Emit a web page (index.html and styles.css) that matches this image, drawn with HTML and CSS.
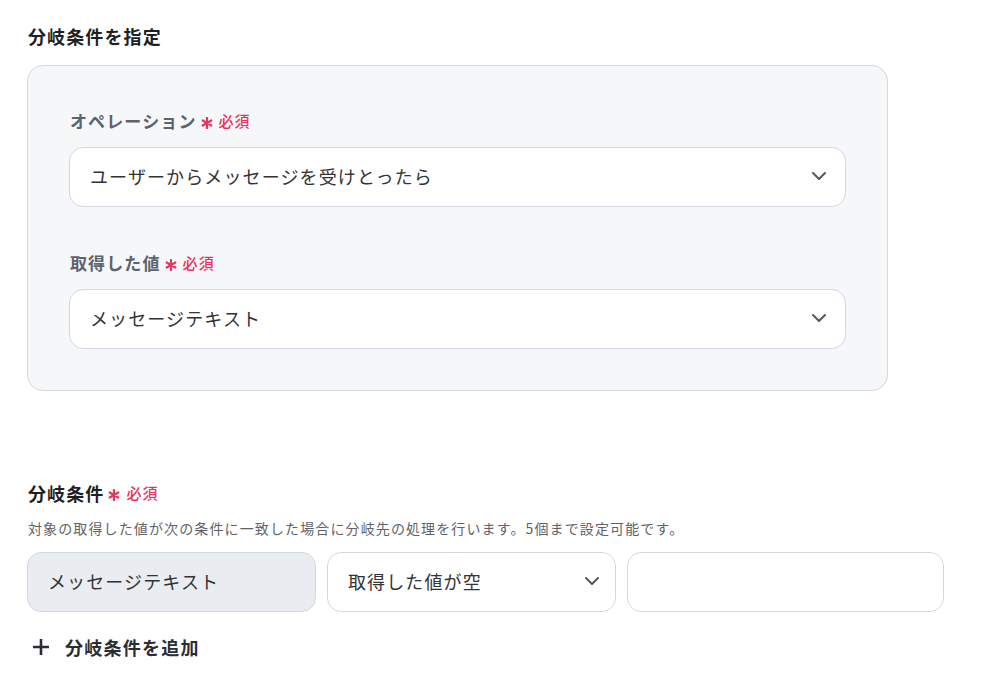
FILE: index.html
```html
<!DOCTYPE html>
<html lang="ja">
<head>
<meta charset="utf-8">
<title>分岐条件を指定</title>
<link rel="stylesheet" href="styles.css">
</head>
<body>
<main class="page">
  <h2 class="title">分岐条件を指定</h2>

  <section class="panel">
    <div class="field">
      <div class="label">オペレーション<span class="req"><svg class="ast" viewBox="0 0 12 12"><path d="M6 1v10M1.7 3.5l8.6 5M1.7 8.5l8.6-5"/></svg>必須</span></div>
      <div class="select">
        <span>ユーザーからメッセージを受けとったら</span>
        <svg class="chev" viewBox="0 0 14 8"><path d="M1 1l6 6 6-6"/></svg>
      </div>
    </div>
    <div class="field">
      <div class="label">取得した値<span class="req"><svg class="ast" viewBox="0 0 12 12"><path d="M6 1v10M1.7 3.5l8.6 5M1.7 8.5l8.6-5"/></svg>必須</span></div>
      <div class="select">
        <span>メッセージテキスト</span>
        <svg class="chev" viewBox="0 0 14 8"><path d="M1 1l6 6 6-6"/></svg>
      </div>
    </div>
  </section>

  <section class="conditions">
    <div class="label label-dark">分岐条件<span class="req"><svg class="ast" viewBox="0 0 12 12"><path d="M6 1v10M1.7 3.5l8.6 5M1.7 8.5l8.6-5"/></svg>必須</span></div>
    <p class="help">対象の取得した値が次の条件に一致した場合に分岐先の処理を行います。5個まで設定可能です。</p>
    <div class="row">
      <div class="box box-fixed">メッセージテキスト</div>
      <div class="box box-select">
        <span>取得した値が空</span>
        <svg class="chev" viewBox="0 0 14 8"><path d="M1 1l6 6 6-6"/></svg>
      </div>
      <div class="box box-input"></div>
    </div>
    <button class="add" type="button">
      <svg class="plus" viewBox="0 0 18 18"><path d="M9 1v16M1 9h16"/></svg>
      <span>分岐条件を追加</span>
    </button>
  </section>
</main>
</body>
</html>
```

FILE: styles.css
```css
* {
  box-sizing: border-box;
}

html, body {
  margin: 0;
  padding: 0;
  background: #ffffff;
}

body {
  font-family: "Noto Sans CJK JP", "Noto Sans", sans-serif;
  color: #222222;
  letter-spacing: 0.07em;
}

.page {
  padding: 23px 28px 0 27px;
}

.title {
  margin: 0 0 0 1px;
  font-size: 18px;
  line-height: 26px;
  font-weight: 700;
  color: #1f1f1f;
}

.panel {
  margin-top: 16px;
  width: 861px;
  padding: 43px 41px 41px 41px;
  background: #f6f7f9;
  border: 1px solid #d3d8e0;
  border-radius: 16px;
  display: flex;
  flex-direction: column;
  gap: 44px;
}

.field {
  display: flex;
  flex-direction: column;
  gap: 14px;
}

.label {
  display: flex;
  align-items: center;
  margin-left: 1px;
  font-size: 17px;
  line-height: 24px;
  font-weight: 700;
  color: #5c636e;
}

.label-dark {
  font-size: 18px;
  color: #1f1f1f;
}

.req {
  display: inline-flex;
  align-items: center;
  margin-left: 4px;
  font-size: 15px;
  font-weight: 500;
  color: #e8335c;
}

.ast {
  width: 12px;
  height: 12px;
  margin-right: 6px;
  margin-top: 3px;
  fill: none;
  stroke: #e8335c;
  stroke-width: 2.2;
  stroke-linecap: round;
}

.select {
  height: 60px;
  display: flex;
  align-items: center;
  justify-content: space-between;
  padding: 0 19px 2px 20px;
  background: #ffffff;
  border: 1px solid #d3d8e0;
  border-radius: 14px;
  font-size: 18px;
  color: #333333;
}

.chev {
  width: 14px;
  height: 8px;
  fill: none;
  stroke: #555a60;
  stroke-width: 2;
  stroke-linecap: round;
  stroke-linejoin: round;
}

.conditions {
  margin-top: 90px;
}

.help {
  margin: 13px 0 0 1px;
  font-size: 14px;
  line-height: 20px;
  color: #5f6368;
}

.row {
  margin-top: 14px;
  display: flex;
  gap: 11px;
}

.box {
  height: 60px;
  display: flex;
  align-items: center;
  padding-bottom: 2px;
  border: 1px solid #d3d8e0;
  border-radius: 14px;
  font-size: 18px;
  color: #333333;
}

.box-fixed {
  width: 289px;
  padding-left: 20px;
  padding-right: 20px;
  background: #e9ecf1;
}

.box-select {
  width: 289px;
  padding-left: 20px;
  padding-right: 16px;
  justify-content: space-between;
  background: #ffffff;
}

.box-input {
  width: 317px;
  background: #ffffff;
}

.add {
  margin-top: 23px;
  padding: 0;
  display: flex;
  align-items: center;
  gap: 15px;
  background: none;
  border: none;
  font-family: inherit;
  font-size: 18px;
  line-height: 24px;
  font-weight: 700;
  letter-spacing: 0.07em;
  color: #2a2d33;
}

.plus {
  width: 18px;
  height: 18px;
  margin-left: 5px;
  fill: none;
  stroke: #2a2d33;
  stroke-width: 2.6;
}
```
